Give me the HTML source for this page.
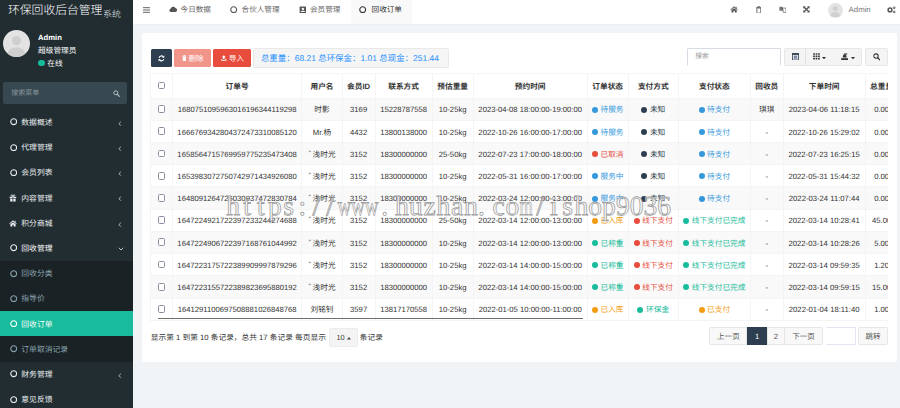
<!DOCTYPE html>
<html lang="zh-CN">
<head>
<meta charset="utf-8">
<title>环保回收后台管理系统</title>
<style>
*{box-sizing:border-box;margin:0;padding:0}
html,body{width:900px;height:408px;overflow:hidden}
body{position:relative;background:#f1f4f6;font-family:"Liberation Sans","Noto Sans CJK SC",sans-serif;font-size:8px;color:#333;line-height:1;text-rendering:geometricPrecision;-webkit-font-smoothing:antialiased}
.abs{position:absolute}
/* ---------- sidebar ---------- */
#side{position:absolute;left:0;top:0;width:133px;height:408px;background:#222d32;overflow:hidden}
#logo{position:absolute;left:0;top:0;width:133px;height:24.5px;color:#fff;font-size:11.8px;line-height:20px;padding-left:8px;white-space:nowrap;font-weight:300}
#logo small{font-size:9px;margin-left:0.6px;position:relative;top:2.6px;letter-spacing:0;font-weight:300;color:#e4e8ea}
#avatar{position:absolute;left:3px;top:30px;width:27px;height:27px;border-radius:50%;background:#e3e3e3;overflow:hidden}
#uname{position:absolute;left:38px;top:33.7px;font-size:7.7px;font-weight:bold;color:#fff}
#urole{position:absolute;left:38px;top:46.6px;font-size:7.7px;color:#fff}
#ustat{position:absolute;left:38px;top:59px;font-size:7.7px;color:#fff}
#ustat i{display:inline-block;width:6.6px;height:6.6px;border-radius:50%;background:#18bc9c;margin-right:2.6px;position:relative;top:0.5px}
#msearch{position:absolute;left:3px;top:82px;width:124px;height:22px;background:#374850;border-radius:2px}
#msearch span{position:absolute;left:8.2px;top:8.2px;font-size:7px;color:#8a979d}
#msearch svg{position:absolute;left:109.6px;top:8px;width:7px;height:7px}
.mi{position:absolute;left:0;width:133px;height:25.2px;color:#e9edef;font-size:7.8px}
.mi.open{color:#fff}
.mi .ic{position:absolute;left:9.6px;top:8.9px;color:#e8ecee}
.mi .tx{position:absolute;left:21.3px;top:9.4px;white-space:nowrap}
.mi .ch{position:absolute;left:118px;top:11.2px;width:3.6px;height:5.4px}
.mi.sub{color:#8aa4af}
.mi.sub .ic{color:#8aa4af}
.mi.act{background:#18bc9c;color:#fff}
.mi.act .ic{color:#fff}
#submenu{position:absolute;left:0;top:260.5px;width:133px;height:101px;background:#1a2226}
/* ---------- header ---------- */
#head{position:absolute;left:133px;top:0;width:767px;height:25px;background:#fff;border-bottom:1px solid #eceff1}
.tab{position:absolute;top:0;height:24.4px;font-size:7.6px;color:#666;white-space:nowrap}
.tab .tx{position:absolute;top:6px}
#tabact{position:absolute;left:217.7px;top:0;width:61px;height:24.4px;background:#f9f9f9}
.hi{position:absolute}
/* ---------- panel ---------- */
#panel{position:absolute;left:142.3px;top:33px;width:755px;height:328.5px;background:#fff;border-radius:2px}

.btn{position:absolute;border-radius:1.6px;color:#fff;font-size:7.6px}
.btn .bt{position:absolute;top:5.6px;white-space:nowrap;font-size:7.5px}
#info{position:absolute;left:110.6px;top:15px;width:196px;height:20px;background:#f5f5f5;border:1px solid #e9e9e9;border-radius:1.6px;color:#1e90ff;font-size:8.46px;white-space:nowrap}
#info span{position:absolute;left:7px;top:5px}
#sinput{position:absolute;left:544.5px;top:15px;width:94px;height:18.4px;border:1px solid #d6dbe4;border-bottom-color:#fff;border-radius:1.5px}
#sinput span{position:absolute;left:7.4px;top:5.2px;font-size:6.8px;color:#999}
#bgrp{position:absolute;left:641.5px;top:15.4px;width:78px;height:17.6px;background:#f4f4f4;border:1px solid #e7e7e7;border-radius:1.6px}
#bgrp .sep{position:absolute;left:20.6px;top:0;width:1px;height:100%;background:#e2e2e2}
#sbtn{position:absolute;left:722.8px;top:15.4px;width:22.6px;height:17.6px;background:#f4f4f4;border:1px solid #e7e7e7;border-radius:1.6px}
#twrap{position:absolute;left:8px;top:39.9px;width:737.3px;height:248px;overflow:hidden}
#tb{border-collapse:collapse;table-layout:fixed;width:787.4px;font-size:7.68px;color:#333}
#tb th,#tb td{border:1px solid #f4f4f4;text-align:center;vertical-align:middle;white-space:nowrap;overflow:hidden;padding:2px 0 0 0}
#tb th{height:24.7px;font-weight:bold;color:#333}
#tb td{height:22.22px}
#tb tbody tr:nth-child(odd){background:#f9f9f9}
.cb{display:inline-block;width:7.8px;height:7.8px;border:1px solid #8d8da0;border-radius:1.6px;background:#fff;vertical-align:middle;position:relative;top:-1.2px}
.q{display:inline-block;width:4.2px;overflow:visible}
.s i{display:inline-block;width:6px;height:6px;border-radius:50%;margin-right:2.6px;position:relative;top:0.4px;background:currentColor}
.s.b{color:#3498db}.s.d{color:#2c3e50}.s.r{color:#e74c3c}.s.o{color:#f39c12}.s.g{color:#18bc9c}
.s.d{color:#2c3e50}
#hscroll{position:absolute;left:15.3px;top:284.7px;width:425px;height:1px;background:#6e6e6e}
#pinfo{position:absolute;left:8.5px;top:300.6px;font-size:7.71px;color:#333;white-space:nowrap}
#psize{position:absolute;left:186.8px;top:295px;width:29px;height:18.6px;background:#f4f4f4;border:1px solid #ececec;border-radius:1.6px;font-size:7.4px;line-height:17px;text-align:center;color:#444}
#pinfo2{position:absolute;left:217.5px;top:300.6px;font-size:7.71px;color:#333}
#pager{position:absolute;left:567px;top:293.7px;width:180px;height:18.8px}
.pg{position:absolute;top:0;height:18.8px;border:1px solid #e6e6e6;background:#f8f8f8;color:#555;font-size:7.6px;line-height:18.6px;text-align:center}
.pg.on{background:#2c3e50;border-color:#2c3e50;color:#fff}
.pin{position:absolute;left:116.9px;top:0;width:29.4px;height:18.4px;border:1px solid #e3e6f0;border-left-color:#fff;background:#fff}
#wm{position:absolute;left:0;top:0;pointer-events:none}
</style>
</head>
<body>

<div id="side">
  <div id="logo">环保回收后台管理<small>系统</small></div>
  <div id="avatar">
    <svg width="27" height="27" viewBox="0 0 27 27"><circle cx="13.5" cy="10.6" r="4.6" fill="#cfcfcf"/><ellipse cx="13.5" cy="23.5" rx="8.6" ry="6.2" fill="#cfcfcf"/></svg>
  </div>
  <div id="uname">Admin</div>
  <div id="urole">超级管理员</div>
  <div id="ustat"><i></i>在线</div>
  <div id="msearch"><span>搜索菜单</span>
    <svg width="8" height="8" viewBox="0 0 8 8"><circle cx="3.2" cy="3.2" r="2.3" fill="none" stroke="#b8c2c7" stroke-width="1.1"/><path d="M5 5 L7.2 7.2" stroke="#b8c2c7" stroke-width="1.3" stroke-linecap="round"/></svg>
  </div>

  <div id="submenu"></div>

  <div class="mi" style="top:109.6px"><svg class="ic" width="7.4" height="7.4" viewBox="0 0 7.4 7.4"><circle cx="3.7" cy="3.7" r="2.95" fill="none" stroke="currentColor" stroke-width="1.1"/></svg><span class="tx">数据概述</span><svg class="ch" width="4" height="6" viewBox="0 0 4 6"><path d="M3.2 0.8 L1 3 L3.2 5.2" fill="none" stroke="#cfd6d9" stroke-width="0.9"/></svg></div>
  <div class="mi" style="top:134.8px"><svg class="ic" width="7.4" height="7.4" viewBox="0 0 7.4 7.4"><circle cx="3.7" cy="3.7" r="2.95" fill="none" stroke="currentColor" stroke-width="1.1"/></svg><span class="tx">代理管理</span><svg class="ch" width="4" height="6" viewBox="0 0 4 6"><path d="M3.2 0.8 L1 3 L3.2 5.2" fill="none" stroke="#cfd6d9" stroke-width="0.9"/></svg></div>
  <div class="mi" style="top:160px"><svg class="ic" width="7.4" height="7.4" viewBox="0 0 7.4 7.4"><circle cx="3.7" cy="3.7" r="2.95" fill="none" stroke="currentColor" stroke-width="1.1"/></svg><span class="tx">会员列表</span><svg class="ch" width="4" height="6" viewBox="0 0 4 6"><path d="M3.2 0.8 L1 3 L3.2 5.2" fill="none" stroke="#cfd6d9" stroke-width="0.9"/></svg></div>
  <div class="mi" style="top:185.2px"><svg class="abs" style="left:9.2px;top:9.2px" width="7.8" height="8" viewBox="0 0 8 8"><path d="M0.6 2.6h6.8v1.5H0.6z M1.2 4.5h5.6v3H1.2z" fill="#e8ecee"/><path d="M4 2.6v5" stroke="#222d32" stroke-width="0.8"/><path d="M4 2.6 C2 2.6 1.6 0.6 2.8 0.6 S4 2.6 4 2.6 C4 2.6 4 0.6 5.2 0.6 S6 2.6 4 2.6z" fill="none" stroke="#e8ecee" stroke-width="0.8"/></svg><span class="tx">内容管理</span><svg class="ch" width="4" height="6" viewBox="0 0 4 6"><path d="M3.2 0.8 L1 3 L3.2 5.2" fill="none" stroke="#cfd6d9" stroke-width="0.9"/></svg></div>
  <div class="mi" style="top:210.4px"><svg class="abs" style="left:9.2px;top:9.8px" width="8" height="6.8" viewBox="0 0 8 7"><path d="M4 0.3 L0.2 3.5 L0.8 4.1 L4 1.5 L7.2 4.1 L7.8 3.5 L6.6 2.5 V0.7 H5.7 V1.7z" fill="#e8ecee"/><path d="M4 2.2 L1.3 4.4 V6.8 H3.3 V4.9 H4.7 V6.8 H6.7 V4.4z" fill="#e8ecee"/></svg><span class="tx">积分商城</span><svg class="ch" width="4" height="6" viewBox="0 0 4 6"><path d="M3.2 0.8 L1 3 L3.2 5.2" fill="none" stroke="#cfd6d9" stroke-width="0.9"/></svg></div>
  <div class="mi open" style="top:235.6px"><svg class="ic" width="7.4" height="7.4" viewBox="0 0 7.4 7.4"><circle cx="3.7" cy="3.7" r="2.95" fill="none" stroke="currentColor" stroke-width="1.1"/></svg><span class="tx">回收管理</span><svg class="abs" style="left:117.6px;top:11px" width="6" height="4" viewBox="0 0 6 4"><path d="M0.8 0.8 L3 3 L5.2 0.8" fill="none" stroke="#cfd6d9" stroke-width="0.9"/></svg></div>

  <div class="mi sub" style="top:260.8px"><svg class="ic" width="7.4" height="7.4" viewBox="0 0 7.4 7.4"><circle cx="3.7" cy="3.7" r="2.95" fill="none" stroke="currentColor" stroke-width="1.1"/></svg><span class="tx">回收分类</span></div>
  <div class="mi sub" style="top:286px"><svg class="ic" width="7.4" height="7.4" viewBox="0 0 7.4 7.4"><circle cx="3.7" cy="3.7" r="2.95" fill="none" stroke="currentColor" stroke-width="1.1"/></svg><span class="tx">指导价</span></div>
  <div class="mi sub act" style="top:311.2px"><svg class="ic" width="7.4" height="7.4" viewBox="0 0 7.4 7.4"><circle cx="3.7" cy="3.7" r="2.95" fill="none" stroke="currentColor" stroke-width="1.1"/></svg><span class="tx">回收订单</span></div>
  <div class="mi sub" style="top:336.4px"><svg class="ic" width="7.4" height="7.4" viewBox="0 0 7.4 7.4"><circle cx="3.7" cy="3.7" r="2.95" fill="none" stroke="currentColor" stroke-width="1.1"/></svg><span class="tx">订单取消记录</span></div>

  <div class="mi" style="top:361.6px"><svg class="ic" width="7.4" height="7.4" viewBox="0 0 7.4 7.4"><circle cx="3.7" cy="3.7" r="2.95" fill="none" stroke="currentColor" stroke-width="1.1"/></svg><span class="tx">财务管理</span><svg class="ch" width="4" height="6" viewBox="0 0 4 6"><path d="M3.2 0.8 L1 3 L3.2 5.2" fill="none" stroke="#cfd6d9" stroke-width="0.9"/></svg></div>
  <div class="mi" style="top:386.8px"><svg class="ic" width="7.4" height="7.4" viewBox="0 0 7.4 7.4"><circle cx="3.7" cy="3.7" r="2.95" fill="none" stroke="currentColor" stroke-width="1.1"/></svg><span class="tx">意见反馈</span></div>
</div>

<div id="head">
  <div id="tabact"></div>
  <!-- hamburger -->
  <svg class="hi" style="left:10px;top:6.8px" width="7" height="6" viewBox="0 0 7 6"><path d="M0 0.7h7M0 3h7M0 5.3h7" stroke="#555" stroke-width="0.9"/></svg>
  <!-- tabs (x relative to head: target x - 133) -->
  <svg class="hi" style="left:35.6px;top:6px" width="8.4" height="6.6" viewBox="0 0 9 7"><path d="M2.2 6.5 A2 2 0 0 1 1.9 2.6 A2.7 2.7 0 0 1 6.9 2.2 A2.2 2.2 0 0 1 7 6.5z" fill="#555"/></svg>
  <div class="tab" style="left:47.6px"><span class="tx">今日数据</span></div>
  <svg class="hi" style="left:97.3px;top:5.9px;color:#555" width="7.4" height="7.4" viewBox="0 0 7.4 7.4"><circle cx="3.7" cy="3.7" r="2.95" fill="none" stroke="currentColor" stroke-width="1.1"/></svg>
  <div class="tab" style="left:108.6px"><span class="tx">合伙人管理</span></div>
  <svg class="hi" style="left:165.8px;top:5.8px" width="7.4" height="7.6" viewBox="0 0 7 7"><rect x="0.6" y="0.3" width="6.1" height="6.4" rx="0.7" fill="#555"/><circle cx="3.7" cy="2.6" r="1.15" fill="#fff"/><path d="M1.6 5.7 C1.6 4 5.8 4 5.8 5.7z" fill="#fff"/></svg>
  <div class="tab" style="left:177px"><span class="tx">会员管理</span></div>
  <svg class="hi" style="left:226.3px;top:5.9px;color:#333" width="7.4" height="7.4" viewBox="0 0 7.4 7.4"><circle cx="3.7" cy="3.7" r="2.95" fill="none" stroke="currentColor" stroke-width="1.1"/></svg>
  <div class="tab" style="left:238.6px;color:#333"><span class="tx">回收订单</span></div>

  <!-- right icons -->
  <svg class="hi" style="left:597px;top:6px" width="8.2" height="6.8" viewBox="0 0 8 7"><path d="M4 0.3 L0.2 3.5 L0.8 4.1 L4 1.5 L7.2 4.1 L7.8 3.5 L6.6 2.5 V0.7 H5.7 V1.7z" fill="#555"/><path d="M4 2.2 L1.3 4.4 V6.8 H3.3 V4.9 H4.7 V6.8 H6.7 V4.4z" fill="#555"/></svg>
  <svg class="hi" style="left:622.6px;top:5.8px" width="5.6" height="7.4" viewBox="0 0 6 8"><path d="M0.3 1.6h5.4M2 1.5V0.6h2v0.9" fill="none" stroke="#555" stroke-width="0.8"/><path d="M0.9 2.2h4.2v5a.5.5 0 0 1-.5.5H1.4a.5.5 0 0 1-.5-.5z" fill="none" stroke="#555" stroke-width="0.9"/></svg>
  <svg class="hi" style="left:646px;top:6.2px" width="7.4" height="7" viewBox="0 0 8 7"><path d="M0.4 0.6h3.6l0.8 4.3H0.4z" fill="#777"/><path d="M3.6 2h4v4.6H4.6z" fill="none" stroke="#555" stroke-width="0.7"/></svg>
  <svg class="hi" style="left:670px;top:6.4px" width="6.8" height="6.8" viewBox="0 0 7 7"><path d="M0.2 0.2h2.6L2 1 3.5 2.5 5 1 4.2 0.2h2.6v2.6L6 2 4.5 3.5 6 5l0.8-0.8v2.6H4.2L5 6 3.5 4.5 2 6l0.8 0.8H0.2V4.2L1 5 2.5 3.5 1 2 0.2 2.8z" fill="#555"/></svg>
  <div class="hi" style="left:695px;top:2.8px;width:14.8px;height:14.8px;border-radius:50%;background:#e3e3e3;overflow:hidden"><svg width="14.6" height="14.6" viewBox="0 0 27 27"><circle cx="13.5" cy="10.6" r="4.6" fill="#cfcfcf"/><ellipse cx="13.5" cy="23.5" rx="8.6" ry="6.2" fill="#cfcfcf"/></svg></div>
  <div class="hi" style="left:715.6px;top:6px;font-size:7.8px;color:#777">Admin</div>
  <svg class="hi" style="left:753.8px;top:6px" width="9" height="7.6" viewBox="0 0 9 7.5"><circle cx="3" cy="3.9" r="1.9" fill="none" stroke="#555" stroke-width="1.5"/><circle cx="7.2" cy="1.7" r="0.9" fill="none" stroke="#555" stroke-width="0.9"/><circle cx="7.2" cy="5.9" r="0.9" fill="none" stroke="#555" stroke-width="0.9"/></svg>
</div>

<div id="panel">

  <!-- toolbar -->
  <div class="btn" style="left:8.5px;top:16px;width:21px;height:18px;background:#2c3e50">
    <svg class="abs" style="left:7.2px;top:5.8px" width="6.8" height="6.8" viewBox="0 0 8 8"><path d="M1.3 3.3 A2.8 2.8 0 0 1 6.3 2.2" fill="none" stroke="#fff" stroke-width="1.3"/><path d="M6.7 4.7 A2.8 2.8 0 0 1 1.7 5.8" fill="none" stroke="#fff" stroke-width="1.3"/><path d="M7.4 0.6v2.6H4.8z M0.6 7.4V4.8h2.6z" fill="#fff"/></svg>
  </div>
  <div class="btn" style="left:31.6px;top:16px;width:36.8px;height:18px;background:#f1948a">
    <svg class="abs" style="left:8.2px;top:6.2px" width="4.8" height="6.2" viewBox="0 0 6 8"><path d="M0.3 1.6h5.4M2 1.5V0.6h2v0.9" fill="none" stroke="#fff" stroke-width="0.9"/><path d="M0.9 2.2h4.2v5a.5.5 0 0 1-.5.5H1.4a.5.5 0 0 1-.5-.5z" fill="#fff"/></svg>
    <span class="bt" style="left:14.6px">删除</span>
  </div>
  <div class="btn" style="left:70.7px;top:16px;width:37.8px;height:18px;background:#e74c3c">
    <svg class="abs" style="left:8.2px;top:6.2px" width="5.6" height="6" viewBox="0 0 7 7.4"><path d="M3.5 0.2 L6 2.9 H4.5 V5 H2.5 V2.9 H1z" fill="#fff"/><path d="M0.2 5.2h1.7v0.9h3.2V5.2h1.7v2H0.2z" fill="#fff"/></svg>
    <span class="bt" style="left:16px">导入</span>
  </div>
  <div id="info"><span>总重量：68.21 总环保金：1.01 总现金：251.44</span></div>

  <!-- right tools -->
  <div id="sinput"><span>搜索</span></div>
  <div id="bgrp">
    <i class="sep"></i>
    <svg class="abs" style="left:7.2px;top:3.6px" width="7" height="7.4" viewBox="0 0 7 7.4"><rect x="0.4" y="0.4" width="6.2" height="6.6" fill="none" stroke="#2c3e50" stroke-width="0.8"/><rect x="0.4" y="0.4" width="6.2" height="1.5" fill="#2c3e50"/><rect x="1.8" y="2.6" width="3.4" height="3.2" fill="#7e8aa0"/></svg>
    <svg class="abs" style="left:28.2px;top:4px" width="7" height="6.6" viewBox="0 0 7 6.6"><path d="M0.2 0.2h1.7v1.6H0.2z M2.65 0.2h1.7v1.6h-1.7z M5.1 0.2h1.7v1.6H5.1z M0.2 2.5h1.7v1.6H0.2z M2.65 2.5h1.7v1.6h-1.7z M5.1 2.5h1.7v1.6H5.1z M0.2 4.8h1.7v1.6H0.2z M2.65 4.8h1.7v1.6h-1.7z M5.1 4.8h1.7v1.6H5.1z" fill="#333"/></svg>
    <svg class="abs" style="left:37.2px;top:7.6px" width="4" height="2.4" viewBox="0 0 4 2.4"><path d="M0 0h4L2 2.4z" fill="#333"/></svg>
    <svg class="abs" style="left:56.2px;top:3.4px" width="7.2" height="7.2" viewBox="0 0 7.2 7.2"><path d="M0.2 5.2h6.8v1.8H0.2z" fill="#333"/><path d="M1.6 4.6 L2.4 1.4 H5 L5.8 4.6z" fill="#333"/><path d="M3 0.3h3.2v1.4H3z" fill="#555"/></svg>
    <svg class="abs" style="left:65.8px;top:7.6px" width="4" height="2.4" viewBox="0 0 4 2.4"><path d="M0 0h4L2 2.4z" fill="#333"/></svg>
  </div>
  <div id="sbtn"><svg class="abs" style="left:6.6px;top:3.6px" width="7.6" height="7.6" viewBox="0 0 8 8"><circle cx="3.2" cy="3.2" r="2.3" fill="none" stroke="#333" stroke-width="1.1"/><path d="M5 5 L7.2 7.2" stroke="#333" stroke-width="1.3" stroke-linecap="round"/></svg></div>

  <!-- table -->
  <div id="twrap">
<!--TB-->
<table id="tb"><colgroup><col style="width:21.5px"><col style="width:129.6px"><col style="width:40.2px"><col style="width:33.1px"><col style="width:56.9px"><col style="width:41.2px"><col style="width:113.9px"><col style="width:41.1px"><col style="width:50.1px"><col style="width:72px"><col style="width:32.9px"><col style="width:81.9px"><col style="width:33px"><col style="width:40px"></colgroup>
<thead><tr><th><i class="cb"></i></th><th>订单号</th><th>用户名</th><th>会员ID</th><th>联系方式</th><th>预估重量</th><th>预约时间</th><th>订单状态</th><th>支付方式</th><th>支付状态</th><th>回收员</th><th>下单时间</th><th>总重量</th><th>环保金</th></tr></thead><tbody>
<tr><td><i class="cb"></i></td><td>1680751095963016196344119298</td><td>时影</td><td>3169</td><td>15228787558</td><td>10-25kg</td><td>2023-04-08 18:00:00-19:00:00</td><td><span class="s b"><i></i>待服务</span></td><td><span class="s d"><i></i>未知</span></td><td><span class="s b"><i></i>待支付</span></td><td>琪琪</td><td>2023-04-06 11:18:15</td><td>0.00</td><td>0.00</td></tr>
<tr><td><i class="cb"></i></td><td>1666769342804372473310085120</td><td>Mr.杨</td><td>4432</td><td>13800138000</td><td>10-25kg</td><td>2022-10-26 16:00:00-17:00:00</td><td><span class="s b"><i></i>待服务</span></td><td><span class="s d"><i></i>未知</span></td><td><span class="s b"><i></i>待支付</span></td><td>-</td><td>2022-10-26 15:29:02</td><td>0.00</td><td>0.00</td></tr>
<tr><td><i class="cb"></i></td><td>1658564715769959775235473408</td><td><span class="q">゛</span>浅时光</td><td>3152</td><td>18300000000</td><td>25-50kg</td><td>2022-07-23 17:00:00-18:00:00</td><td><span class="s r"><i></i>已取消</span></td><td><span class="s d"><i></i>未知</span></td><td><span class="s b"><i></i>待支付</span></td><td>-</td><td>2022-07-23 16:25:15</td><td>0.00</td><td>0.00</td></tr>
<tr><td><i class="cb"></i></td><td>1653983072750742971434926080</td><td><span class="q">゛</span>浅时光</td><td>3152</td><td>18300000000</td><td>10-25kg</td><td>2022-05-31 16:00:00-17:00:00</td><td><span class="s b"><i></i>服务中</span></td><td><span class="s d"><i></i>未知</span></td><td><span class="s b"><i></i>待支付</span></td><td>-</td><td>2022-05-31 15:44:32</td><td>0.00</td><td>0.00</td></tr>
<tr><td><i class="cb"></i></td><td>1648091264726030937472830784</td><td><span class="q">゛</span>浅时光</td><td>3152</td><td>18300000000</td><td>10-25kg</td><td>2022-03-24 12:00:00-13:00:00</td><td><span class="s b"><i></i>服务中</span></td><td><span class="s d"><i></i>未知</span></td><td><span class="s b"><i></i>待支付</span></td><td>-</td><td>2022-03-24 11:07:44</td><td>0.00</td><td>0.00</td></tr>
<tr><td><i class="cb"></i></td><td>1647224921722397233244274688</td><td><span class="q">゛</span>浅时光</td><td>3152</td><td>18300000000</td><td>25-50kg</td><td>2022-03-14 12:00:00-13:00:00</td><td><span class="s o"><i></i>已入库</span></td><td><span class="s r"><i></i>线下支付</span></td><td><span class="s g"><i></i>线下支付已完成</span></td><td>-</td><td>2022-03-14 10:28:41</td><td>45.00</td><td>0.00</td></tr>
<tr><td><i class="cb"></i></td><td>1647224906722397168761044992</td><td><span class="q">゛</span>浅时光</td><td>3152</td><td>18300000000</td><td>10-25kg</td><td>2022-03-14 12:00:00-13:00:00</td><td><span class="s g"><i></i>已称重</span></td><td><span class="s r"><i></i>线下支付</span></td><td><span class="s g"><i></i>线下支付已完成</span></td><td>-</td><td>2022-03-14 10:28:26</td><td>5.00</td><td>0.00</td></tr>
<tr><td><i class="cb"></i></td><td>1647223175722389909997879296</td><td><span class="q">゛</span>浅时光</td><td>3152</td><td>18300000000</td><td>10-25kg</td><td>2022-03-14 14:00:00-15:00:00</td><td><span class="s g"><i></i>已称重</span></td><td><span class="s r"><i></i>线下支付</span></td><td><span class="s g"><i></i>线下支付已完成</span></td><td>-</td><td>2022-03-14 09:59:35</td><td>1.20</td><td>0.00</td></tr>
<tr><td><i class="cb"></i></td><td>1647223155722389823695880192</td><td><span class="q">゛</span>浅时光</td><td>3152</td><td>18300000000</td><td>10-25kg</td><td>2022-03-14 14:00:00-15:00:00</td><td><span class="s g"><i></i>已称重</span></td><td><span class="s r"><i></i>线下支付</span></td><td><span class="s g"><i></i>线下支付已完成</span></td><td>-</td><td>2022-03-14 09:59:15</td><td>15.00</td><td>0.00</td></tr>
<tr><td><i class="cb"></i></td><td>1641291100697508881026848768</td><td>刘铭钊</td><td>3597</td><td>13817170558</td><td>10-25kg</td><td>2022-01-05 10:00:00-11:00:00</td><td><span class="s o"><i></i>已入库</span></td><td><span class="s g"><i></i>环保金</span></td><td><span class="s o"><i></i>已支付</span></td><td>-</td><td>2022-01-04 18:11:40</td><td>1.00</td><td>0.00</td></tr>
</tbody></table>
<!--/TB-->
  </div>
  <div id="hscroll"></div>

  <!-- pagination -->
  <div id="pinfo">显示第 1 到第 10 条记录，总共 17 条记录 每页显示</div>
  <div id="psize">10<svg width="4" height="2.4" viewBox="0 0 4 2.4" style="margin-left:2.2px;position:relative;top:-0.4px"><path d="M0 2.4h4L2 0z" fill="#444"/></svg></div>
  <div id="pinfo2">条记录</div>
  <div id="pager">
    <span class="pg" style="left:0;width:38.2px;border-radius:1.5px 0 0 1.5px">上一页</span>
    <span class="pg on" style="left:37.8px;width:19.8px">1</span>
    <span class="pg" style="left:57.4px;width:18.2px">2</span>
    <span class="pg" style="left:75.1px;width:38.3px;border-radius:0 1.5px 1.5px 0">下一页</span>
    <span class="pin"></span>
    <span class="pg" style="left:148.9px;width:29.6px;border-radius:1.5px">跳转</span>
  </div>

</div>

<!--WM--><svg id="wm" width="900" height="408" viewBox="0 0 900 408"><text y="215" font-family="Liberation Serif, serif" font-size="27.5" fill="#fff" fill-opacity="0.85" stroke="#9c9c9c" stroke-width="0.8"><tspan x="226.3 243.2 257.1 267.9 283.3 298.6">https:</tspan><tspan x="312.5 326.3">//</tspan><tspan x="337.4" textLength="40.9" lengthAdjust="spacingAndGlyphs">www</tspan><tspan x="381.3 395.1 408.9 423.5 436.5 451.1 464.1 477.9 492.5 505.5">.huzhan.co</tspan><tspan x="519.6" textLength="13.2" lengthAdjust="spacingAndGlyphs">m</tspan><tspan x="536.2 550.0 562.3 574.5 588.3 602.1 615.9 629.7 643.5 657.3">/ishop9036</tspan></text></svg><!--/WM-->
</body>
</html>
